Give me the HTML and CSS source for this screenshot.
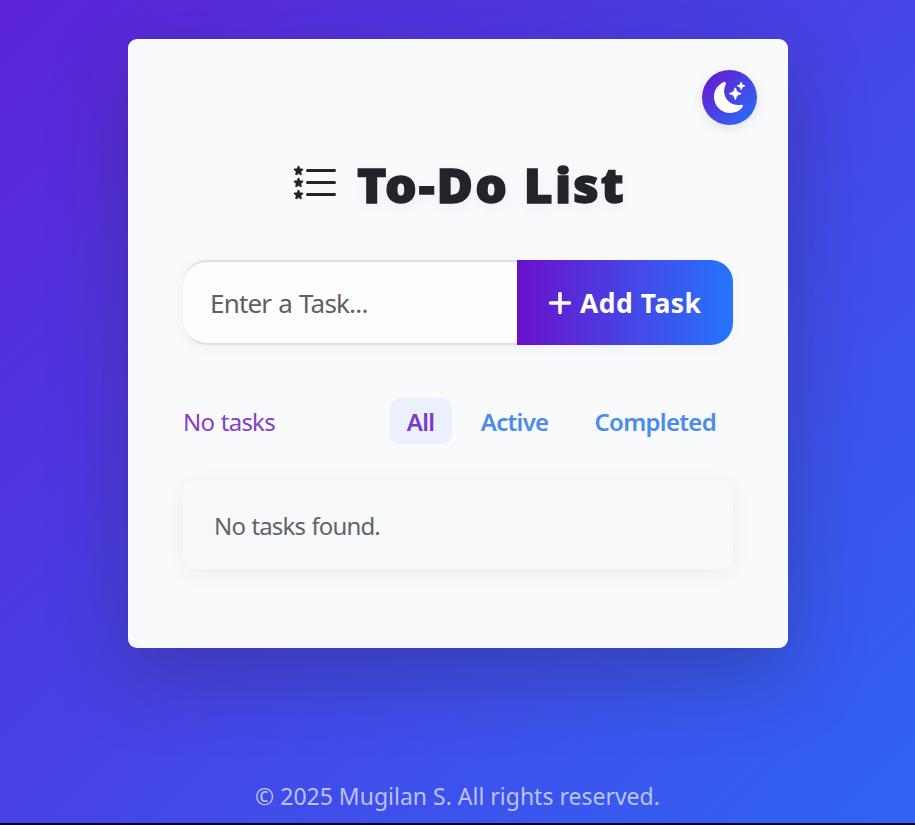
FILE: index.html
```html
<!DOCTYPE html>
<html lang="en">
<head>
<meta charset="utf-8">
<title>To-Do List</title>
<link rel="stylesheet" href="styles.css">
</head>
<body>
<main class="card">
  <button class="theme" aria-label="Toggle theme">
    <svg class="moon" viewBox="0 0 16 16" fill="currentColor"><path d="M6 .278a.77.77 0 0 1 .08.858 7.2 7.2 0 0 0-.878 3.46c0 4.021 3.278 7.277 7.318 7.277q.792-.001 1.533-.16a.79.79 0 0 1 .81.316.73.73 0 0 1-.031.893A8.35 8.35 0 0 1 8.344 16C3.734 16 0 12.286 0 7.71 0 4.266 2.114 1.312 5.124.06A.75.75 0 0 1 6 .278"/><path stroke="currentColor" stroke-width=".3" d="M10.794 3.148a.217.217 0 0 1 .412 0l.387 1.162c.173.518.579.924 1.097 1.097l1.162.387a.217.217 0 0 1 0 .412l-1.162.387a1.73 1.73 0 0 0-1.097 1.097l-.387 1.162a.217.217 0 0 1-.412 0l-.387-1.162A1.73 1.73 0 0 0 9.31 6.593l-1.162-.387a.217.217 0 0 1 0-.412l1.162-.387a1.73 1.73 0 0 0 1.097-1.097zM13.863.099a.145.145 0 0 1 .274 0l.258.774c.115.346.386.617.732.732l.774.258a.145.145 0 0 1 0 .274l-.774.258a1.16 1.16 0 0 0-.732.732l-.258.774a.145.145 0 0 1-.274 0l-.258-.774a1.16 1.16 0 0 0-.732-.732l-.774-.258a.145.145 0 0 1 0-.274l.774-.258c.346-.115.617-.386.732-.732z"/></svg>
  </button>
  <h1 class="title">
    <svg class="list-icon" viewBox="0 0 16 16" fill="currentColor"><defs><path id="star" stroke="currentColor" stroke-width=".15" d="M2.242 2.194a.27.27 0 0 1 .516 0l.162.53c.035.115.14.194.258.194h.551c.259 0 .37.333.164.493l-.468.363a.28.28 0 0 0-.094.3l.173.569c.078.256-.213.462-.423.3l-.417-.324a.27.27 0 0 0-.328 0l-.417.323c-.21.163-.5-.043-.423-.299l.173-.57a.28.28 0 0 0-.094-.299l-.468-.363c-.206-.16-.095-.493.164-.493h.55a.27.27 0 0 0 .259-.194z"/></defs><use href="#star"/><use href="#star" y="4"/><use href="#star" y="8"/><path d="M5.5 3.5h9M5.5 7.5h9M5.5 11.5h9" stroke="currentColor" stroke-linecap="round"/></svg>
    <span>To-Do List</span>
  </h1>
  <form class="entry">
    <input class="field" type="text" placeholder="Enter a Task...">
    <button class="add" type="button">
      <svg class="plus" viewBox="0 0 24 24"><path d="M12 2.5v19M2.5 12h19" stroke="currentColor" stroke-width="3.6" stroke-linecap="round"/></svg>
      <span>Add Task</span>
    </button>
  </form>
  <div class="toolbar">
    <span class="count">No tasks</span>
    <nav class="filters">
      <a class="filter all">All</a>
      <a class="filter active">Active</a>
      <a class="filter completed">Completed</a>
    </nav>
  </div>
  <div class="empty"><span>No tasks found.</span></div>
</main>
<footer class="footer"><span>© 2025 Mugilan S. All rights reserved.</span></footer>
</body>
</html>
```
FILE: styles.css
```css
* { box-sizing: border-box; }
body {
  margin: 0;
  height: 825px;
  padding-top: 39px;
  overflow: hidden;
  display: flex;
  flex-direction: column;
  border-bottom: 2px solid #05061c;
  font-family: "Noto Sans", "Open Sans", sans-serif;
  background: linear-gradient(135deg, #5c23d6, #3064f4);
}
.card {
  width: 660px;
  height: 609px;
  margin-left: 128px;
  padding: 31px 55px 0;
  border-radius: 9px;
  background: #f8fafc;
  box-shadow: 0 27px 80px rgba(34, 34, 60, .3);
  display: flex;
  flex-direction: column;
}
button { border: 0; color: #fff; font-family: inherit; }
.theme {
  align-self: flex-end;
  margin-right: -24px;
  width: 55px;
  height: 55px;
  padding: 0;
  border-radius: 50%;
  background: linear-gradient(135deg, #6a11cb, #2575fc);
  box-shadow: 0 3px 12px rgba(0, 0, 0, .1);
  display: flex;
  align-items: center;
  justify-content: center;
}
.moon { width: 31px; height: 31px; overflow: visible; }
.title {
  margin: 34px 0 0 108px;
  height: 50px;
  display: flex;
  align-items: center;
  gap: 18px;
  color: #212529;
  font-size: 47px;
  font-weight: 900;
  line-height: 52px;
  letter-spacing: 1.9px;
  white-space: nowrap;
  text-shadow: 0 4px 12px rgba(106, 17, 203, .06);
}
.title span {
  padding-top: 2px;
  -webkit-text-stroke: 1.3px #212529;
  transform: scaleX(1.06);
  transform-origin: left;
}
.list-icon { width: 48px; height: 48px; flex: none; }
.entry {
  display: flex;
  height: 85px;
  margin: 51px 0 0;
  border-radius: 24px;
  box-shadow: 0 3px 14px rgba(0, 0, 0, .045);
}
.field {
  width: 334px;
  padding: 1px 27px 0;
  border: solid #dedfe3;
  border-width: 2px 0;
  border-radius: 24px 0 0 24px;
  background: #fdfdfe;
  font: 26px "Noto Sans", sans-serif;
  letter-spacing: -.8px;
  word-spacing: 1px;
}
.field::placeholder { color: #5c5f64; opacity: 1; }
.add {
  width: 216px;
  padding: 0 0 0 31px;
  border-radius: 0 22px 22px 0;
  background: linear-gradient(90deg, #6a11cb, #2575fc);
  display: flex;
  align-items: center;
  gap: 8px;
  font-size: 26.5px;
  font-weight: 700;
  letter-spacing: .5px;
  white-space: nowrap;
}
.plus { width: 24px; height: 24px; flex: none; }
.add span { padding-top: 1px; }
.toolbar {
  height: 46px;
  margin-top: 53px;
  display: flex;
  align-items: center;
  justify-content: space-between;
  font-size: 24px;
  line-height: 48px;
}
.count { padding-top: 2px; color: #8540c8; letter-spacing: -.75px; word-spacing: 1px; }
.filters { display: flex; gap: 12px; }
.filter { height: 46px; padding: 0 17px; color: #4b8bed; font-weight: 600; letter-spacing: -.7px; border-radius: 10px; }
.all { width: 62px; color: #7d39c7; background: #eaf1fc; }
.empty {
  height: 89px;
  margin-top: 36px;
  padding-left: 31px;
  border-radius: 10px;
  background: #f8f9fb;
  box-shadow: 0 4px 20px rgba(0, 0, 0, .06);
  color: #626466;
  font-size: 24px;
  line-height: 91px;
  letter-spacing: -.86px;
  word-spacing: 1px;
}
.footer {
  margin-top: 132px;
  text-align: center;
  color: #bac2fa;
  font-size: 23px;
  line-height: 32px;
  white-space: nowrap;
}
```
